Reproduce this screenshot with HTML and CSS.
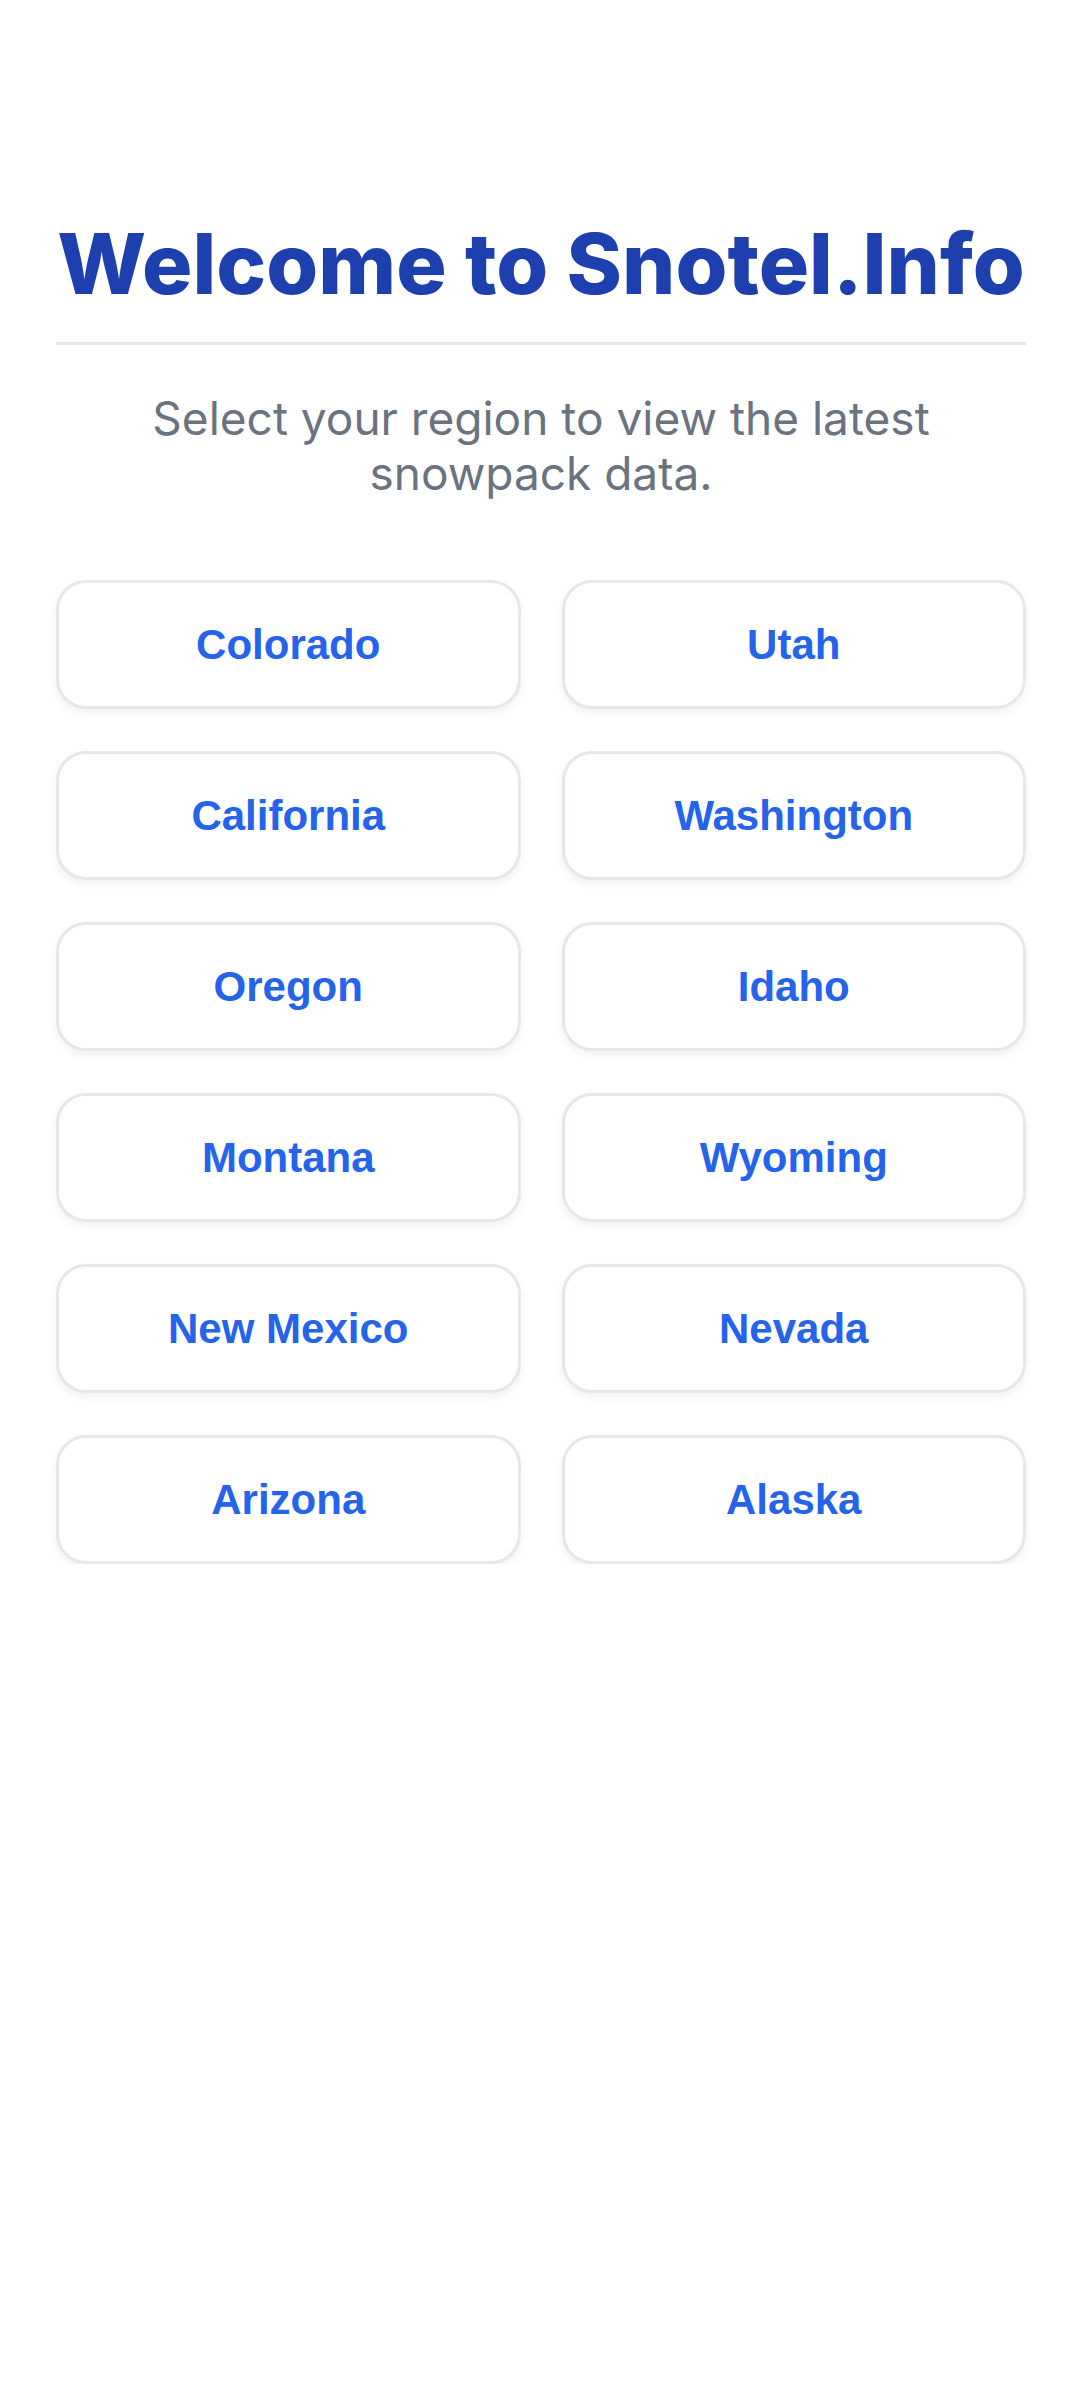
FILE: index.html
```html
<!DOCTYPE html>
<html lang="en">
<head>
  <meta charset="UTF-8" />
  <title>Snotel.Info</title>
  <link rel="stylesheet" href="styles.css">
</head>
<body>
  <main class="page">
    <h1 class="title">Welcome to Snotel.Info</h1>
    <p class="subtitle">Select your region to view the latest snowpack data.</p>

    <div class="region-grid">
      <button class="region">Colorado</button>
      <button class="region">Utah</button>
      <button class="region">California</button>
      <button class="region">Washington</button>
      <button class="region">Oregon</button>
      <button class="region">Idaho</button>
      <button class="region">Montana</button>
      <button class="region">Wyoming</button>
      <button class="region">New Mexico</button>
      <button class="region">Nevada</button>
      <button class="region">Arizona</button>
      <button class="region">Alaska</button>
    </div>
  </main>
</body>
</html>
```

FILE: styles.css
```css
body { margin: 0; background: #fff; font-family: Inter, "Noto Sans", sans-serif; }
.page { padding: 214px 56px 0; }
.title { margin: 0; padding-bottom: 28px; border-bottom: 3px solid #e5e7eb; text-align: center; font-size: 84px; line-height: 100px; font-weight: 800; color: #1e40af; }
.subtitle { margin: 46px auto 0; max-width: 860px; text-align: center; font-size: 46px; line-height: 55px; color: #6b7280; }
.region-grid { display: grid; grid-template-columns: 1fr 1fr; gap: 42px 41px; margin-top: 79px; }
.region { height: 129px; background: #fff; border: 3px solid #e5e7eb; border-radius: 30px; box-shadow: 0 4px 10px rgba(0, 0, 0, 0.06); font-family: "Liberation Sans", Arial, sans-serif; font-size: 42px; font-weight: 700; color: #2563eb; cursor: pointer; }
```
